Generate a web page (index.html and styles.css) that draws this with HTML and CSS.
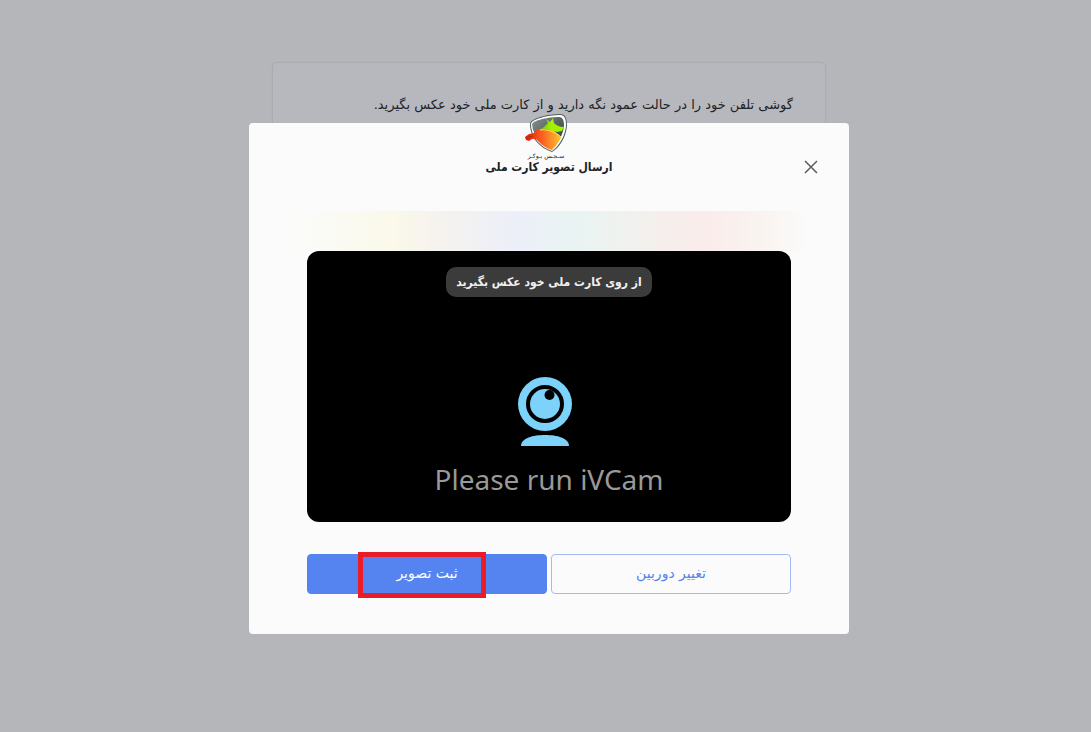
FILE: index.html
```html
<!DOCTYPE html>
<html lang="fa" dir="rtl">
<head>
  <meta charset="UTF-8">
  <meta name="viewport" content="width=device-width, initial-scale=1.0">
  <title>ارسال تصویر کارت ملی</title>
  <link rel="stylesheet" href="styles.css">
</head>
<body>

  <main class="page">
    <div class="card">
      <p>گوشی تلفن خود را در حالت عمود نگه دارید و از کارت ملی خود عکس بگیرید.</p>
    </div>
  </main>

  <div class="overlay">
    <section class="modal" role="dialog" aria-labelledby="modal-title">
      <div class="logo">
        <svg width="42" height="38" viewBox="0 0 42 38" aria-hidden="true">
          <defs>
            <linearGradient id="shield" x1="0" y1="0" x2="1" y2="1">
              <stop offset="0" stop-color="#8a9090"/>
              <stop offset=".5" stop-color="#566262"/>
              <stop offset="1" stop-color="#263838"/>
            </linearGradient>
            <linearGradient id="bear" x1="0" y1="0" x2="1" y2="0">
              <stop offset="0" stop-color="#d81e05"/>
              <stop offset=".45" stop-color="#fa5a20"/>
              <stop offset="1" stop-color="#ffc431"/>
            </linearGradient>
            <linearGradient id="bull" x1="0" y1="0" x2="1" y2="0">
              <stop offset="0" stop-color="#5fc016"/>
              <stop offset=".5" stop-color="#a4f200"/>
            </linearGradient>
          </defs>
          <path d="M5 10C5 4 24 0 35 0C41 0 42 5 42 12C41 23 35 33 27 38C17 35 5 25 5 10Z" fill="#4d6361"/>
          <path d="M6 10C6 5 24 1 35 1C40 1 41 5 41 12C40 22 34 32 27 37C17 34 6 24 6 10Z" fill="#fff"/>
          <path d="M7 10C9 6 24 3 34 3C38 3 39 7 39 12C38 21 33 29 27 35C18 32 8 23 7 10Z" fill="url(#shield)"/>
          <path d="M14 16L19 13L23 9L21 5L25 8L28 4L29 9C31 11 34 13 39 13L37 17L32 18L29 17L34 21L36 24L27 21Z" fill="url(#bull)"/>
          <path d="M0 23L4 20L9 19L11 16L15 15C22 14 30 17 36 23C34 28 31 32 27 36C22 35 17 31 14 28L11 25L7 25L4 27L1 26Z" fill="url(#bear)"/>
          <path d="M15 16C23 15 30 18 36 23" fill="none" stroke="#ffe15a"/>
          <path d="M3 23L8 22" fill="none" stroke="#b72b08"/>
        </svg>
        <span>سـجـس بـوکـر</span>
      </div>

      <header class="modal-header">
        <h1 id="modal-title">ارسال تصویر کارت ملی</h1>
        <button class="close" type="button" aria-label="بستن">
          <svg width="14" height="14" viewBox="0 0 14 14" aria-hidden="true">
            <path d="M1 1L13 13M13 1L1 13" fill="none" stroke="#5c5c5c" stroke-width="1.5"/>
          </svg>
        </button>
      </header>

      <div class="glow"></div>

      <div class="camera">
        <p class="hint">از روی کارت ملی خود عکس بگیرید</p>
        <svg class="webcam" width="54" height="70" viewBox="0 0 54 70" aria-hidden="true">
          <circle cx="27" cy="27" r="27" fill="#7dd2f9"/>
          <circle cx="27" cy="27" r="17" fill="#7dd2f9" stroke="#000" stroke-width="4"/>
          <circle cx="31.5" cy="18" r="5" fill="#000"/>
          <path d="M3 69C3 61 15 58 27 58C39 58 51 61 51 69Z" fill="#7dd2f9"/>
        </svg>
        <p class="status" lang="en" dir="ltr">Please run iVCam</p>
      </div>

      <div class="actions">
        <button class="btn btn-outline" type="button">تغییر دوربین</button>
        <button class="btn btn-primary" type="button">ثبت تصویر<span class="marker"></span></button>
      </div>
    </section>
  </div>

</body>
</html>
```
FILE: styles.css
```css
* {
  box-sizing: border-box;
  margin: 0;
  padding: 0;
}

body {
  min-height: 100vh;
  background: #b4b6ba;
  color: #212226;
  font-family: "DejaVu Sans", sans-serif;
  font-size: 13px;
  line-height: 20px;
}

.page {
  padding: 63px 0 0 7px;
}

.card {
  max-width: 552px;
  min-height: 400px;
  margin: 0 auto;
  padding: 32px;
  border-radius: 4px;
  background: #b7b8bd;
  box-shadow: 0 0 2px rgba(0, 0, 0, 0.2);
}

.overlay {
  position: fixed;
  inset: 0;
  padding: 123px 0 24px 7px;
}

.modal {
  position: relative;
  max-width: 600px;
  margin: 0 auto;
  padding: 24px 58px 40px;
  border-radius: 4px;
  background: #fbfbfb;
}

.logo {
  position: absolute;
  top: -9px;
  left: 276px;
  width: 42px;
  text-align: center;
}

.logo svg {
  display: block;
}

.logo span {
  display: block;
  font-size: 6px;
  line-height: 8px;
  white-space: nowrap;
}

.modal-header {
  display: grid;
  grid-template-columns: 24px 1fr 24px;
  align-items: center;
  height: 40px;
  margin: 0 -32px 24px;
}

.modal-header h1 {
  grid-column: 2;
  font-family: "DejaVu Sans Condensed", "DejaVu Sans", sans-serif;
  font-size: 12px;
  text-align: center;
}

.close {
  grid-column: 1;
  grid-row: 1;
  display: flex;
  align-items: center;
  justify-content: center;
  height: 24px;
  border: 0;
  background: none;
  cursor: pointer;
}

.glow {
  height: 40px;
  margin: 0 -18px;
  background: linear-gradient(90deg, #fbfbfb, #faf9ea 20%, #f6f3ee 28%, #eceff9 44%, #e9f4f2 56%, #f1f1ee 66%, #faecea 80%, #f9f3ef 90%, #fbfbfb);
}

.camera {
  display: flex;
  flex-direction: column;
  align-items: center;
  height: 271px;
  padding-top: 16px;
  border-radius: 12px;
  background: #000;
}

.hint {
  padding: 5px 10px;
  border-radius: 10px;
  background: #3b3b3b;
  color: #f0f0f0;
  font-family: "DejaVu Sans Condensed", "DejaVu Sans", sans-serif;
  font-size: 12px;
  font-weight: bold;
}

.webcam {
  margin: 80px 8px 12px 0;
}

.status {
  color: #999;
  font-family: "Noto Sans", sans-serif;
  font-size: 28px;
  line-height: 40px;
}

.actions {
  display: grid;
  grid-template-columns: 1fr 1fr;
  gap: 4px;
  margin-top: 32px;
}

.btn {
  position: relative;
  height: 40px;
  padding-bottom: 2px;
  border: 1px solid #a3bbf5;
  border-radius: 4px;
  background: #fbfbfb;
  color: #5583e8;
  font-family: inherit;
  font-size: 14px;
  cursor: pointer;
}

.btn-primary {
  border-color: #5583f0;
  background: #5583f0;
  color: #fff;
}

.marker {
  position: absolute;
  inset: -3px 60px -5px 50px;
  border: 5px solid #e91d27;
}
```
